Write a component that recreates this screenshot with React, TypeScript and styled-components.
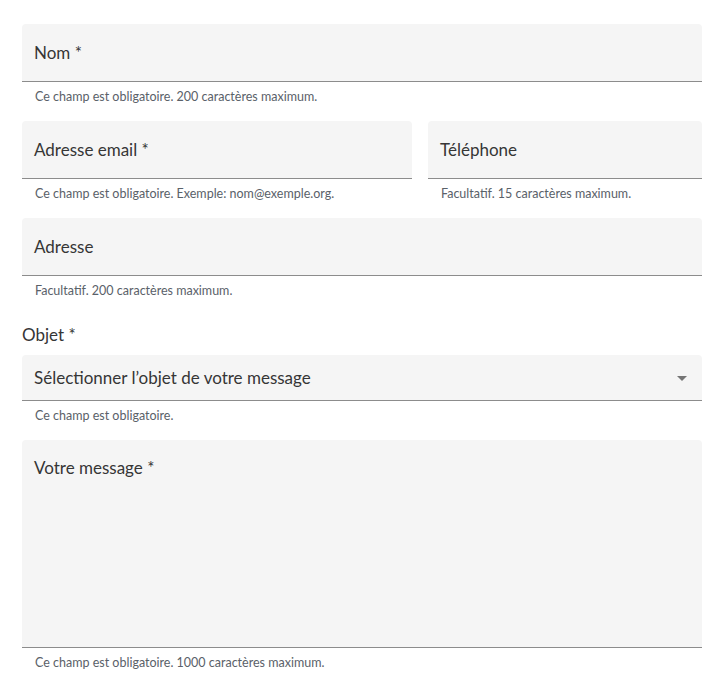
import React from "react";
import styled, { createGlobalStyle } from "styled-components";

const GlobalStyle = createGlobalStyle`
  body {
    margin: 0;
    background: #ffffff;
    font-family: Lato, "Open Sans", sans-serif;
  }
`;

const Form = styled.form`
  width: 680px;
  padding: 24px 22px 0;
  display: flex;
  flex-direction: column;
`;

const Row = styled.div`
  display: grid;
  grid-template-columns: 390px 1fr;
  column-gap: 16px;
`;

const FieldWrap = styled.div`
  display: flex;
  flex-direction: column;
  margin-bottom: 16px;
`;

const Box = styled.div<{ $height: number }>`
  position: relative;
  height: ${(p) => p.$height}px;
  background: #f5f5f5;
  border-radius: 4px 4px 0 0;
  border-bottom: 1px solid #8c8c8c;
  box-sizing: border-box;
  display: flex;
  align-items: ${(p) => (p.$height > 100 ? "flex-start" : "center")};
  padding: ${(p) => (p.$height > 100 ? "17px 12px" : "0 12px")};
  color: #363636;
  font-size: 17px;
`;

const Helper = styled.div`
  margin-top: 7px;
  padding-left: 13px;
  font-size: 12.5px;
  line-height: 16px;
  color: #5a6169;
`;

const GroupLabel = styled.div`
  font-size: 17px;
  color: #363636;
  margin: 10px 0 10px;
  line-height: 20px;
`;

const Arrow = styled.span`
  position: absolute;
  right: 15px;
  top: 50%;
  margin-top: -2px;
  width: 0;
  height: 0;
  border-left: 5px solid transparent;
  border-right: 5px solid transparent;
  border-top: 5px solid #757575;
`;

type FieldProps = {
  label: string;
  helper: string;
  height?: number;
  select?: boolean;
};

const Field: React.FC<FieldProps> = ({ label, helper, height = 58, select }) => (
  <FieldWrap>
    <Box $height={height}>
      {label}
      {select ? <Arrow /> : null}
    </Box>
    <Helper>{helper}</Helper>
  </FieldWrap>
);

export default function App() {
  return (
    <>
      <GlobalStyle />
      <Form>
        <Field label="Nom *" helper="Ce champ est obligatoire. 200 caractères maximum." />
        <Row>
          <Field
            label="Adresse email *"
            helper="Ce champ est obligatoire. Exemple: nom@exemple.org."
          />
          <Field label="Téléphone" helper="Facultatif. 15 caractères maximum." />
        </Row>
        <Field label="Adresse" helper="Facultatif. 200 caractères maximum." />
        <GroupLabel>Objet *</GroupLabel>
        <Field
          label="Sélectionner l’objet de votre message"
          helper="Ce champ est obligatoire."
          height={46}
          select
        />
        <Field
          label="Votre message *"
          helper="Ce champ est obligatoire. 1000 caractères maximum."
          height={208}
        />
      </Form>
    </>
  );
}
